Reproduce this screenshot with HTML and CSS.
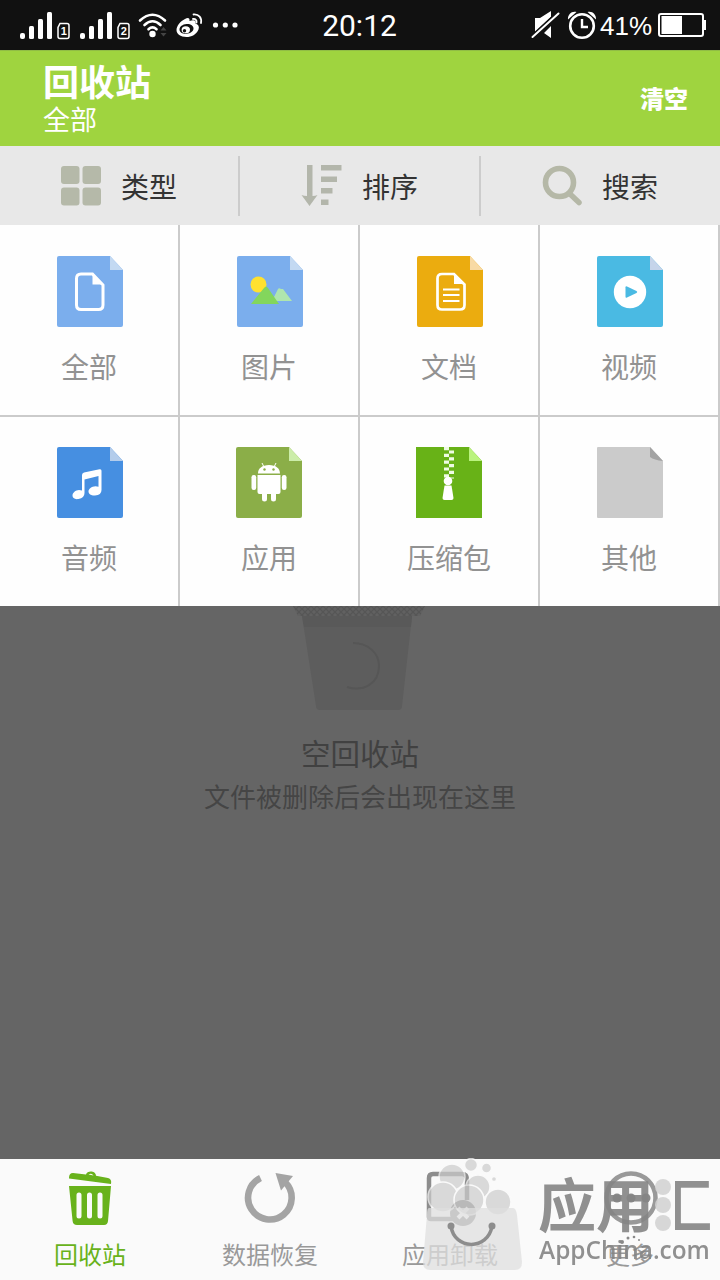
FILE: index.html
```html
<!DOCTYPE html>
<html lang="zh-CN">
<head>
<meta charset="utf-8">
<title>回收站</title>
<link rel="stylesheet" href="styles.css">
</head>
<body>
<div class="screen">
  <div class="status">
    <svg class="status-left" width="240" height="50" viewBox="0 0 240 50">
      <g fill="#fff">
        <rect x="20" y="33" width="5" height="6" rx="2"/><rect x="29" y="26" width="5" height="13" rx="1.500"/><rect x="38" y="19" width="5" height="20" rx="1.500"/><rect x="47" y="12" width="5" height="27" rx="1.500"/>
        <rect x="80" y="33" width="5" height="6" rx="2"/><rect x="89" y="26" width="5" height="13" rx="1.500"/><rect x="98" y="19" width="5" height="20" rx="1.500"/><rect x="107" y="12" width="5" height="27" rx="1.500"/>
        <circle cx="152.500" cy="34" r="3.200"/>
        <circle cx="215.500" cy="25" r="2.600"/><circle cx="225.300" cy="25" r="2.600"/><circle cx="235" cy="25" r="2.600"/>
      </g>
      <g fill="none" stroke="#fff" stroke-width="1.500">
        <path d="M60 23.500h7a2 2 0 0 1 2 2v11a2 2 0 0 1-2 2h-7a2 2 0 0 1-2-2v-9z"/>
        <path d="M120 23.500h7a2 2 0 0 1 2 2v11a2 2 0 0 1-2 2h-7a2 2 0 0 1-2-2v-9z"/>
        <path stroke-width="2.600" stroke-linecap="round" d="M140 20.500Q152.500 9 165 20.500M144.500 25Q152.500 17.500 160.500 25M148.500 29.300Q152.500 25.500 156.500 29.300"/>
      </g>
      <path d="M160.500 30.500l3-3.500 3 3.500zM160.500 33l3 3.500 3-3.500z" fill="#444"/>
      <text class="sim" x="63.700" y="35">1</text><text class="sim" x="123.700" y="35">2</text>
      <path fill="#fff" fill-rule="evenodd" d="M185 19c3-2 5-1 4.500 2 4-1.500 7-1 6 2.500 3 1 4 3 3 6-2 5-7 7.500-12 7.500-6 0-10-3-10-7 0-4 4-9 8.500-11zm1.500 5c-4 .3-7 2.700-7 5.500s3 4.500 7 4.300c4-.3 7-2.500 7-5.300s-3-4.800-7-4.500z"/>
      <ellipse cx="185.800" cy="29.800" rx="4.200" ry="3.500" fill="#fff"/><circle cx="184.500" cy="30.700" r="1.700" fill="#111"/>
      <path d="M193 19c2.500-.5 4 1.500 3.500 3.500M193.500 14.500c5.500-.5 8.500 3.500 7.500 8.500" fill="none" stroke="#fff" stroke-width="1.800" stroke-linecap="round"/>
    </svg>
    <span class="clock">20:12</span>
    <div class="status-right">
      <svg width="70" height="50" viewBox="530 0 70 50">
        <path fill="#fff" d="M535 18h5l11-7v6l-16 15zM544 33l7-7v12z"/>
        <path d="M532 37l26-24" stroke="#111" stroke-width="4"/><path d="M532.500 37l26-23.500" stroke="#fff" stroke-width="2" stroke-linecap="round"/>
        <circle cx="582" cy="26" r="11.800" fill="none" stroke="#fff" stroke-width="2.600"/>
        <path d="M582 19v8h6" fill="none" stroke="#fff" stroke-width="2.400"/>
        <path d="M568 19.500c-.5-5 4-9 8.500-7.500zM596 19.500c.5-5-4-9-8.500-7.500z" fill="#fff"/>
      </svg>
      <span class="percent">41%</span>
      <svg width="48" height="50" viewBox="658 0 48 50">
        <rect x="659" y="14" width="44" height="22" rx="2" fill="none" stroke="#fff" stroke-width="2"/>
        <rect x="661.500" y="16" width="20.500" height="18" fill="#fff"/><rect x="704" y="20" width="2" height="10" fill="#fff"/>
      </svg>
    </div>
  </div>

  <header class="header">
    <div class="heading"><h1 class="title">回收站</h1><div class="subtitle">全部</div></div>
    <span class="clear">清空</span>
  </header>

  <div class="tools">
    <div class="tool">
      <svg width="42" height="42" viewBox="0 0 42 42" fill="#b5b9a9"><rect x="1" y="1" width="18.500" height="18" rx="3"/><rect x="22.500" y="1" width="18.500" height="18" rx="3"/><rect x="1" y="22.500" width="18.500" height="18" rx="3"/><rect x="22.500" y="22.500" width="18.500" height="18" rx="3"/></svg>
      <span>类型</span>
    </div>
    <div class="tool tool-sort">
      <svg width="42" height="42" viewBox="0 0 42 42" fill="#b3b6ab"><path d="M6 0h5.500v31q3 0 5-1l-8 11-8-11q2.500 1 5.500 1z"/><rect x="20" y="0" width="20.500" height="5.500"/><rect x="20" y="11.500" width="16" height="5.500"/><rect x="20" y="23" width="11.500" height="5.500"/><rect x="20" y="34.500" width="7.500" height="5.500"/></svg>
      <span>排序</span>
    </div>
    <div class="tool tool-search">
      <svg width="42" height="42" viewBox="0 0 42 42" fill="none" stroke="#b5b8a7"><circle cx="18.500" cy="17.500" r="14" stroke-width="5.600"/><path d="M29 29l9 8.500" stroke-width="5.500" stroke-linecap="round"/></svg>
      <span>搜索</span>
    </div>
  </div>

  <div class="types">
    <div class="type">
      <svg width="66" height="71" viewBox="0 0 66 71"><path d="M2 0h51l13 14v55q0 2-2 2H2q-2 0-2-2V2q0-2 2-2z" fill="#7baeed"/><path d="M53 0l13 14H53z" fill="#c3d9f2"/><path d="M24 18h11.500l10.500 11v20q0 4.500-4.500 4.500H24q-4.500 0-4.500-4.500V22.500Q19.500 18 24 18z" fill="none" stroke="#fff" stroke-width="3"/><path d="M35.500 17v11.500H47z" fill="#fff"/></svg>
      <span>全部</span>
    </div>
    <div class="type">
      <svg width="66" height="71" viewBox="0 0 66 71"><path d="M2 0h51l13 14v55q0 2-2 2H2q-2 0-2-2V2q0-2 2-2z" fill="#7baeed"/><path d="M53 0l13 14H53z" fill="#c3d9f2"/><circle cx="21.500" cy="28.500" r="8" fill="#ffe12f"/><path d="M35 45l6-12q1-1.500 3 0h2l9 12z" fill="#afe6ae"/><path d="M14 48l13-16q2-3 4 0l11 16z" fill="#83d65c"/></svg>
      <span>图片</span>
    </div>
    <div class="type">
      <svg width="66" height="71" viewBox="0 0 66 71"><path d="M2 0h51l13 14v55q0 2-2 2H2q-2 0-2-2V2q0-2 2-2z" fill="#ebac0f"/><path d="M53 0l13 14H53z" fill="#f8daa5"/><path d="M25 18h12l10.500 10.500V49q0 4.500-4.500 4.500H25q-4.500 0-4.500-4.500V22.500Q20.500 18 25 18z" fill="none" stroke="#fff" stroke-width="2.700"/><path d="M37 17v11h11.500z" fill="#fff"/><path d="M26 33.500h16.500M26 39h16.500M26 45h16.500" stroke="#fff" stroke-width="2"/></svg>
      <span>文档</span>
    </div>
    <div class="type">
      <svg width="66" height="71" viewBox="0 0 66 71"><path d="M2 0h51l13 14v55q0 2-2 2H2q-2 0-2-2V2q0-2 2-2z" fill="#4abae3"/><path d="M53 0l13 14H53z" fill="#c5d4ea"/><circle cx="33" cy="36" r="16.200" fill="#fff"/><path d="M28.500 31.200q0-1.500 1.500-.8l9.500 4.600q1.500 1 0 2L30 41.600q-1.500.7-1.500-.8z" fill="#4abae3"/></svg>
      <span>视频</span>
    </div>
    <div class="type">
      <svg width="66" height="71" viewBox="0 0 66 71"><path d="M2 0h51l13 14v55q0 2-2 2H2q-2 0-2-2V2q0-2 2-2z" fill="#468fe1"/><path d="M53 0l13 14H53z" fill="#b3cceb"/><path d="M25 28q0-2 2-2.600l15.500-3.200q2-.4 2 1.500V43q0 5-6.500 5.500c-4 .2-6.500-1.500-6.500-4s3-5.300 7-5.300q1.500 0 3 .6V29l-14 3.500V46q0 5-6 6c-4 .6-6-1-6-3.500s3-5.500 6.500-5.500q1.500 0 3 .5z" fill="#fff"/></svg>
      <span>音频</span>
    </div>
    <div class="type type-app">
      <svg width="66" height="71" viewBox="0 0 66 71"><path d="M2 0h51l13 14v55q0 2-2 2H2q-2 0-2-2V2q0-2 2-2z" fill="#8bae48"/><path d="M53 0l13 14H53z" fill="#cceda9"/><g fill="#fff"><path d="M22 26.500c0-5 4-8.500 11-8.500s11 3.500 11 8.500zM21.500 28h23v17q0 2-2 2H40v5q0 2.500-2.500 2.500T35 52v-5h-4v5q0 2.500-2.500 2.500T26 52v-5h-2.500q-2 0-2-2z"/><rect x="15.500" y="28" width="4.700" height="15" rx="2.200"/><rect x="45.800" y="28" width="4.700" height="15" rx="2.200"/></g><path d="M26 16l2 4M40 16l-2 4" stroke="#fff"/><circle cx="28.500" cy="22.500" r="1.200" fill="#8bae48"/><circle cx="37.500" cy="22.500" r="1.200" fill="#8bae48"/></svg>
      <span>应用</span>
    </div>
    <div class="type type-zip">
      <svg width="66" height="71" viewBox="0 0 66 71"><path d="M0 0h53l13 14v57H0z" fill="#68b217"/><path d="M53 0l13 14H53z" fill="#baf37e"/><g fill="none" stroke="#eefbe3" stroke-width="5"><path d="M30.500 0v31" stroke-dasharray="3.200 3.600"/><path d="M35.500 3.400v28" stroke-dasharray="3.200 3.600"/></g><circle cx="32" cy="34" r="4.300" fill="#fff"/><path d="M28.500 38.500h7l2 12.500q0 2-2 2h-7q-2 0-2-2z" fill="#fff"/></svg>
      <span>压缩包</span>
    </div>
    <div class="type">
      <svg width="66" height="71" viewBox="0 0 66 71"><path d="M1 0h52l13 14v56q0 1-1 1H1q-1 0-1-1V1q0-1 1-1z" fill="#cbcbcb"/><path d="M53 0l13 14q-9-1-13-4z" fill="#a3a3a3"/></svg>
      <span>其他</span>
    </div>
  </div>

  <main class="empty">
    <svg width="134" height="105" viewBox="0 0 134 105">
      <defs><pattern id="mesh" width="6" height="6" patternUnits="userSpaceOnUse"><path d="M0 0l6 6M6 0L0 6" stroke="#565656" stroke-width="1.300"/></pattern></defs>
      <path d="M0 0h132l-5 10H5z" fill="#616161"/><path d="M0 0h132l-5 10H5z" fill="url(#mesh)"/>
      <path d="M9 10h110l-10 90q0 4-4 4H27q-4 0-4-4z" fill="#5d5d5d"/><path d="M9 10h110l-1 11H11z" fill="#595959"/>
      <path d="M60 37c15 0 26 10 26 23 0 18-16 26-32 21" fill="none" stroke="#565656" stroke-width="2"/>
    </svg>
    <p class="empty-title">空回收站</p>
    <p class="empty-text">文件被删除后会出现在这里</p>
  </main>

  <nav class="nav">
    <div class="nav-item active">
      <svg width="60" height="60" viewBox="0 0 60 60" fill="#68b21b"><path d="M9 19h42l-3 35q-.4 4-4 4H17q-4 0-4.400-4z"/><path d="M9 11q0-5 4-5l13 1.500c1-4.500 10-4 10 1.200l12 2.300q4 1 3 6L9 11.500z"/><path d="M28.500 7.500q3-2 5 1z" fill="#fafafa"/><path d="M19 28v21M29.500 28v21M40 28v21" stroke="#fafafa" stroke-width="5" stroke-linecap="round"/></svg>
      <span>回收站</span>
    </div>
    <div class="nav-item">
      <svg width="60" height="60" viewBox="0 0 60 60"><path d="M20.500 11A21.800 21.800 0 1 0 45 15" fill="none" stroke="#a4a4a4" stroke-width="6.600"/><path d="M35.500 6l17.500 3L41 23.500z" fill="#a4a4a4"/></svg>
      <span>数据恢复</span>
    </div>
    <div class="nav-item">
      <svg width="60" height="60" viewBox="0 0 60 60"><path d="M40 52H11q-2 0-2-2V11q0-4 4-4h29q5 0 5 6v20" fill="none" stroke="#8d8d8d" stroke-width="4.500"/><circle cx="43" cy="46" r="13" fill="#8c8c8c"/><path d="M38 41l10 10m0-10L38 51" stroke="#fff" stroke-width="4"/></svg>
      <span>应用卸载</span>
    </div>
    <div class="nav-item">
      <svg width="60" height="60" viewBox="0 0 60 60"><circle cx="31" cy="31" r="24.500" fill="none" stroke="#999" stroke-width="4.500"/><g fill="#8a8a8a"><circle cx="17" cy="31" r="4.500"/><circle cx="31" cy="31" r="4.500"/><circle cx="46" cy="31" r="4.500"/></g></svg>
      <span>更多</span>
    </div>
  </nav>

  <div class="watermark">
    <svg class="bag" width="110" height="112" viewBox="420 1158 110 112">
      <g fill="#ccc" stroke="#fafafa" stroke-width="1.500" opacity=".7"><circle cx="452" cy="1177" r="13"/><circle cx="478" cy="1187" r="12"/><circle cx="443" cy="1197" r="15"/><circle cx="469" cy="1200" r="15"/><circle cx="498" cy="1202" r="13"/><circle cx="471" cy="1165" r="6.500"/><circle cx="486.500" cy="1168" r="5"/><circle cx="494" cy="1179" r="2.600"/></g>
      <path d="M429 1208h84q3 0 4 7l5 47q0 8-7 8h-85q-7 0-7-8l4-47q0-7 2-7z" fill="#dedede" opacity=".74"/>
      <path d="M451 1226c3 24 37 25 41 0" fill="none" stroke="#8d8d8d" stroke-width="3.500"/><circle cx="451" cy="1226" r="3.500" fill="#8d8d8d"/><circle cx="492" cy="1226" r="3.500" fill="#8d8d8d"/>
    </svg>
    <div class="brand"><div class="brand-name">应用<span class="hui">汇</span></div><div class="brand-url">AppChina.com</div></div>
    <svg class="drops" width="90" height="90" viewBox="612 1172 90 90"><g fill="#d2d2d2" opacity=".85"><circle cx="663" cy="1187" r="8"/><circle cx="663" cy="1205" r="8"/><circle cx="663" cy="1223" r="8"/></g><g fill="#888"><circle cx="622" cy="1242" r="2"/><circle cx="628" cy="1238" r="1.500"/><circle cx="634" cy="1237" r="1.300"/><circle cx="639" cy="1240" r="1"/></g></svg>
  </div>
</div>
</body>
</html>
```

FILE: styles.css
```css
* { box-sizing: border-box; }
body { margin: 0; background: #656565; font-family: "Noto Sans CJK SC", sans-serif; }
svg { display: block; flex: none; }
.screen { position: relative; width: 720px; height: 1280px; overflow: hidden; display: flex; flex-direction: column; }
.status { height: 50px; flex: none; background: #111; color: #fff; display: grid; grid-template-columns: 240px 239px 241px; font-family: Roboto, sans-serif; }
.clock { font-size: 30px; line-height: 51px; text-align: center; }
.status-right { display: flex; padding-left: 51px; }
.percent { width: 58px; font: 26px/52px "Liberation Sans", sans-serif; }
.sim { font: bold 11px "Liberation Sans", sans-serif; fill: #fff; text-anchor: middle; }
.header { height: 96px; flex: none; padding: 8px 32px 0 43px; background: #9fd43f; color: #fff; display: flex; justify-content: space-between; border-top: 1px solid #91bd45; }
.title { margin: 0; font-size: 36px; line-height: 42px; font-weight: 700; }
.subtitle { font-size: 27px; line-height: 36px; }
.clear { font-size: 24px; line-height: 78px; font-weight: 900; }
.tools { height: 79px; flex: none; background: #e8e8e8; display: grid; grid-template-columns: 240px 241px 239px; }
.tool { display: flex; gap: 19px; padding: 19px 0 0 60px; color: #333; font-size: 28px; line-height: 43px; background: linear-gradient(#ccc, #ccc) no-repeat right 10px / 2px 60px; }
.tool-sort { padding-left: 61px; }
.tool-search { background: none; }
.types { height: 381px; flex: none; display: grid; grid-template-columns: repeat(4, 180px); grid-template-rows: 192px 189px; background: #fefefe; }
.type { display: flex; flex-direction: column; align-items: center; gap: 19px; padding-top: 31px; border-right: 2px solid #cbcbcb; border-bottom: 2px solid #cbcbcb; font-size: 28px; line-height: 40px; color: #929292; }
.type:nth-child(n+5) { padding-top: 30px; border-bottom: 0; }
.type svg { margin-left: 2px; }
.type-app svg, .type-zip svg { margin-left: 0; }
.empty { flex: 1; background: #656565; display: flex; flex-direction: column; align-items: center; color: #414141; }
.empty-title { margin: 21px 0 0; font-size: 29.500px; line-height: 40px; }
.empty-text { margin: 6px 0 0; font-size: 26px; line-height: 36px; color: #454545; }
.nav { height: 121px; flex: none; background: #fafafa; display: grid; grid-template-columns: repeat(4, 180px); }
.nav-item { display: flex; flex-direction: column; align-items: center; padding-top: 8px; font-size: 24px; line-height: 36px; color: #999; }
.nav-item span { margin-top: 9px; }
.active { color: #68b21b; }
.watermark { position: absolute; left: 420px; top: 1158px; display: flex; width: 300px; height: 122px; color: #858585; }
.brand { margin-left: 8px; padding-top: 8px; white-space: nowrap; }
.brand-name { font-size: 58px; line-height: 72px; font-weight: 700; opacity: .9; }
.hui { background: linear-gradient(90deg, transparent 36%, #858585 36%); -webkit-background-clip: text; background-clip: text; color: transparent; }
.brand-url { margin-left: 1px; font: 600 24.400px/24px "Open Sans", sans-serif; opacity: .9; }
.drops { position: absolute; left: 192px; top: 14px; }
```
